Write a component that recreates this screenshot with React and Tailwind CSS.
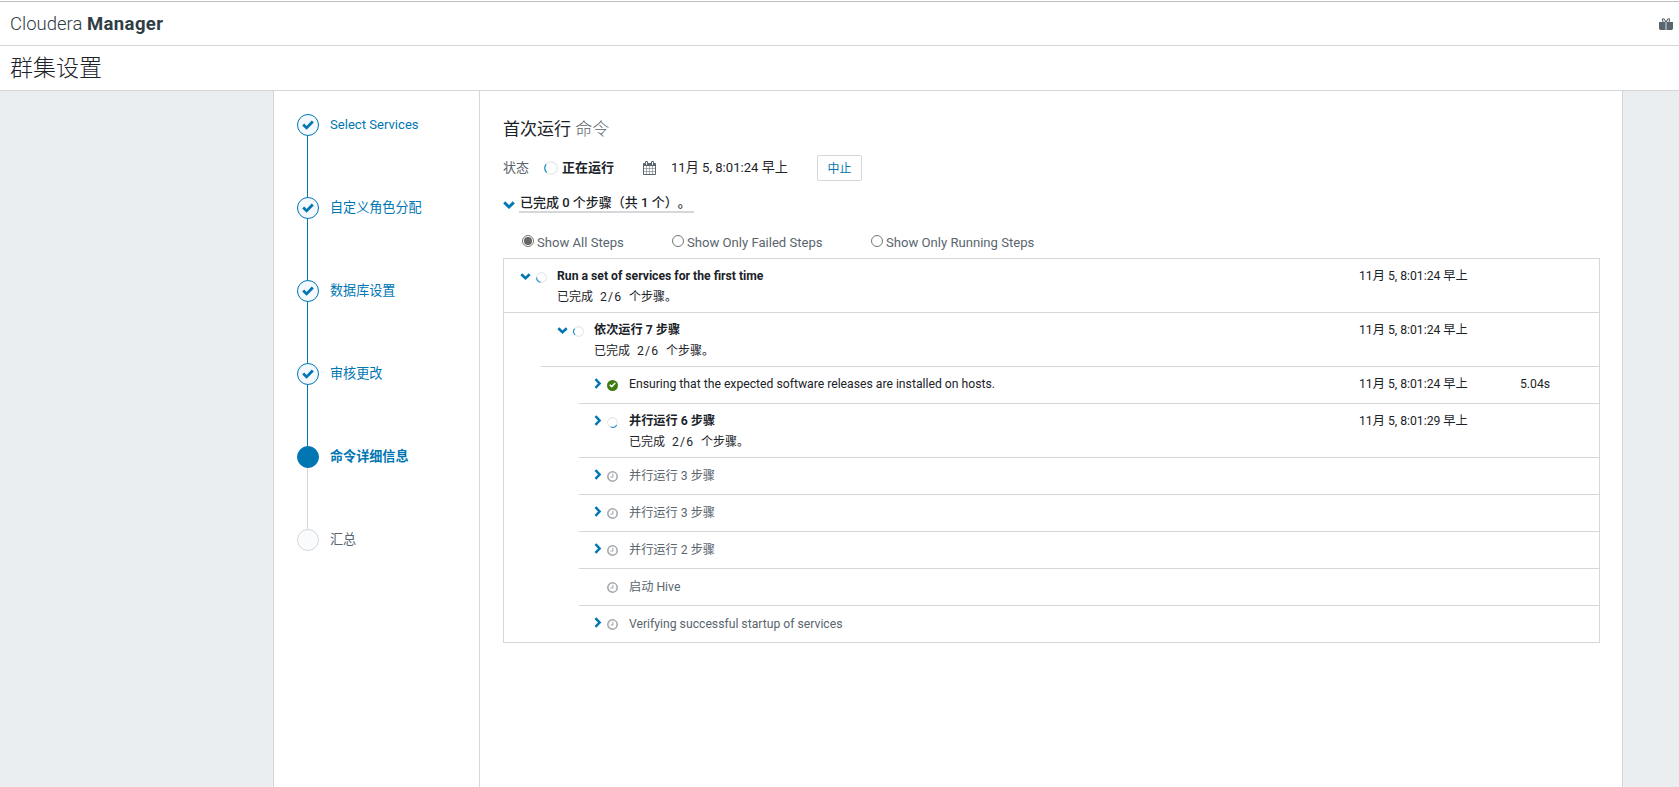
import React from 'react';
import clsx from 'clsx';

const steps = [
  { label: 'Select Services', state: 'done' },
  { label: '自定义角色分配', state: 'done' },
  { label: '数据库设置', state: 'done' },
  { label: '审核更改', state: 'done' },
  { label: '命令详细信息', state: 'current' },
  { label: '汇总', state: 'todo' },
];

const filters = [
  { label: 'Show All Steps', checked: true, width: 'w-[150px]' },
  { label: 'Show Only Failed Steps', checked: false, width: 'w-[199px]' },
  { label: 'Show Only Running Steps', checked: false, width: 'w-[200px]' },
];

const commands = [
  { level: 0, arrow: 'down', status: 'running', turn: 100, title: 'Run a set of services for the first time', progress: '2/6', time: '11月 5, 8:01:24 早上' },
  { level: 1, arrow: 'down', status: 'running', turn: 135, title: '依次运行 7 步骤', progress: '2/6', time: '11月 5, 8:01:24 早上' },
  { level: 2, arrow: 'right', status: 'success', title: 'Ensuring that the expected software releases are installed on hosts.', time: '11月 5, 8:01:24 早上', duration: '5.04s' },
  { level: 2, arrow: 'right', status: 'running', turn: 30, title: '并行运行 6 步骤', progress: '2/6', time: '11月 5, 8:01:29 早上' },
  { level: 2, arrow: 'right', status: 'pending', title: '并行运行 3 步骤' },
  { level: 2, arrow: 'right', status: 'pending', title: '并行运行 3 步骤' },
  { level: 2, arrow: 'right', status: 'pending', title: '并行运行 2 步骤' },
  { level: 2, status: 'pending', title: '启动 Hive' },
  { level: 2, arrow: 'right', status: 'pending', title: 'Verifying successful startup of services' },
];

function ChevronDown({ className }) {
  return (
    <svg viewBox="0 0 12 8" className={className} fill="none" stroke="#0076b3" strokeWidth="2.9">
      <path d="M1.2 1.4 6 6l4.8-4.6" />
    </svg>
  );
}

function ChevronRight({ className }) {
  return (
    <svg viewBox="0 0 8 12" className={className} fill="none" stroke="#0076b3" strokeWidth="2.7">
      <path d="M1.5 1.3 6 6 1.5 10.7" />
    </svg>
  );
}

function Check({ className }) {
  return (
    <svg viewBox="0 0 12 10" className={className} fill="none" stroke="currentColor" strokeWidth="2.8">
      <path d="M1.2 4.6 4.6 7.9 10.8 1.6" />
    </svg>
  );
}

function Spinner({ className, turn }) {
  return (
    <svg viewBox="0 0 14 14" className={className} fill="none">
      <circle cx="7" cy="7" r="6.2" stroke="#e3e7ea" strokeWidth="1.3" />
      <circle
        cx="7"
        cy="7"
        r="6.2"
        stroke="#2a93c9"
        strokeWidth="1.4"
        strokeDasharray="8.5 40"
        transform={`rotate(${turn} 7 7)`}
      />
    </svg>
  );
}

function Calendar() {
  return (
    <svg viewBox="64 0 1664 1792" className="h-[14px] w-[13px]" fill="#5a656d">
      <path d="M192 1664h288v-288h-288v288zm352 0h320v-288h-320v288zm-352-352h288v-320h-288v320zm352 0h320v-320h-320v320zm-352-384h288v-288h-288v288zm736 736h320v-288h-320v288zm-384-736h320v-288h-320v288zm768 736h288v-288h-288v288zm-384-352h320v-320h-320v320zm-352-864v-288q0-13-9.5-22.5t-22.5-9.5h-64q-13 0-22.5 9.5t-9.5 22.5v288q0 13 9.5 22.5t22.5 9.5h64q13 0 22.5-9.5t9.5-22.5zm736 864h288v-320h-288v320zm-384-384h320v-288h-320v288zm384 0h288v-288h-288v288zm32-480v-288q0-13-9.5-22.5t-22.5-9.5h-64q-13 0-22.5 9.5t-9.5 22.5v288q0 13 9.5 22.5t22.5 9.5h64q13 0 22.5-9.5t9.5-22.5zm384-64v1280q0 52-38 90t-90 38h-1408q-52 0-90-38t-38-90v-1280q0-52 38-90t90-38h128v-96q0-66 47-113t113-47h64q66 0 113 47t47 113v96h384v-96q0-66 47-113t113-47h64q66 0 113 47t47 113v96h128q52 0 90 38t38 90z" />
    </svg>
  );
}

function Gift() {
  return (
    <svg viewBox="0 0 14 12" className="h-3 w-[14px]" fill="none">
      <path d="M0 4h6.5v8H.6V11H0zM7.5 4H14v7h-.6v1H7.5z" fill="#5a656d" />
      <path d="M6.5 4h1v8h-1z" fill="#7f93ad" />
      <path d="M6.6 4C6 1.6 4.9.6 4.1.7c-1 .2-.9 2 .2 3.1M7.4 4C8 1.6 9.1.6 9.9.7c1 .2.9 2-.2 3.1" stroke="#5a656d" strokeWidth="1.1" />
    </svg>
  );
}

function StatusIcon({ status, turn }) {
  if (status === 'running') return <Spinner className="h-[11px] w-[11px]" turn={turn} />;
  if (status === 'success') {
    return (
      <span className="flex h-[11px] w-[11px] items-center justify-center rounded-full bg-[#3b7d0f] text-white">
        <Check className="h-[6px] w-[7px]" />
      </span>
    );
  }
  return (
    <svg viewBox="0 0 12 12" className="h-[11px] w-[11px]" fill="none" stroke="#a3a8ac">
      <circle cx="6" cy="6" r="5.1" strokeWidth="1.7" />
      <path d="M6.4 3v3.5H3.8" strokeWidth="1.1" />
    </svg>
  );
}

function WizardSteps() {
  return (
    <aside className="w-[206px] shrink-0 border-r border-[#d5d7da] pt-[23px] pl-[23px]">
      {steps.map((step, i) => (
        <div key={step.label} className="flex h-[83px]">
          <div className="flex w-[22px] flex-col items-center">
            <div
              className={clsx(
                'flex h-[22px] w-[22px] shrink-0 items-center justify-center rounded-full border text-[#0076b3]',
                step.state === 'done' && 'border-[#0076b3] bg-[#f3f9fd]',
                step.state === 'current' && 'border-[#0076b3] bg-[#0076b3]',
                step.state === 'todo' && 'border-[#d5d7da] bg-[#fafbfd]'
              )}
            >
              {step.state === 'done' && <Check className="h-[10px] w-[12px]" />}
            </div>
            {i < steps.length - 1 && (
              <div className={clsx('mr-px w-px flex-1', step.state === 'current' ? 'bg-[#d5d7da]' : 'bg-[#0076b3]')} />
            )}
          </div>
          <span
            className={clsx(
              'ml-[11px] h-[22px] text-[13.1px] leading-[21px]',
              step.state === 'todo' ? 'text-[#5a656d]' : 'text-[#0076b3]',
              step.state === 'current' && 'font-bold'
            )}
          >
            {step.label}
          </span>
        </div>
      ))}
    </aside>
  );
}

function CommandRow({ row, last }) {
  const nested = row.level === 2;
  return (
    <div
      className={clsx(
        'flex items-start pt-2',
        row.progress ? 'h-[54px]' : last ? 'h-9' : 'h-[37px]',
        !last && 'border-b border-[#d5d7da]',
        row.level === 1 && 'ml-[37px]',
        nested && 'ml-[75px]'
      )}
    >
      <div className={clsx('flex h-5 shrink-0 items-center', nested ? 'w-[50px] pl-[15px]' : 'w-[53px] pl-4')}>
        <span className={clsx('flex items-center', nested ? 'w-[12.5px]' : 'w-[16px]')}>
          {row.arrow === 'down' && <ChevronDown className="mb-0.5 h-[7px] w-[11px]" />}
          {row.arrow === 'right' && <ChevronRight className="mb-[3px] h-[11px] w-[7.5px]" />}
        </span>
        <StatusIcon status={row.status} turn={row.turn} />
      </div>
      <div className="flex-1">
        <p
          className={clsx(
            'text-[12.2px]',
            row.status === 'running' && 'font-bold',
            row.status === 'pending' ? 'leading-5 text-[#5a656d]' : 'leading-[18px] text-[#1b2329]'
          )}
        >
          {row.title}
        </p>
        {row.progress && (
          <p className="flex text-[12px] leading-6 text-[#1b2329]">
            <span>已完成</span>
            <span className="ml-[7px] w-[29px] text-[12.2px] tracking-[1.2px]">{row.progress}</span>
            <span>个步骤。</span>
          </p>
        )}
      </div>
      <div className="w-[161px] text-[12.2px] leading-[18px] text-[#1b2329]">{row.time}</div>
      <div className="w-[79px] text-[12.2px] leading-[18px] text-[#1b2329]">{row.duration}</div>
    </div>
  );
}

export default function App() {
  return (
    <div className="flex h-[787px] w-[1679px] flex-col overflow-hidden bg-white font-[Roboto,'Noto_Sans_CJK_SC',sans-serif] text-[13px] text-[#1b2329]">
      <header className="mt-px flex h-[45px] shrink-0 items-center justify-between border-t border-b border-t-[#bdbdbd] border-b-[#d5d7da] pr-1.5 pl-2.5">
        <div className="pt-0.5 text-[18.5px] text-[#2f3d45]">
          <span className="font-light">Cloudera</span> <span className="font-bold tracking-[0.4px]">Manager</span>
        </div>
        <Gift />
      </header>
      <div className="flex h-[45px] shrink-0 items-center border-b border-[#d5d7da] pl-2.5">
        <h1 className="pt-0.5 text-[23px] leading-[42px] font-light">群集设置</h1>
      </div>

      <div className="flex flex-1 bg-[#eaeef1] pr-14 pl-[273px]">
        <div className="flex w-[1350px] border-x border-[#d5d7da] bg-white">
          <WizardSteps />

          <main className="flex-1 pt-[26px] pr-[22px] pl-[23px]">
            <h2 className="h-6 text-[17px] leading-6">
              首次运行 <span className="font-light text-[#5a656d]">命令</span>
            </h2>

            <div className="mt-[14px] flex h-[26px] items-center">
              <span className="w-[41px] text-[#5a656d]">状态</span>
              <Spinner className="h-[14px] w-[14px]" turn={135} />
              <span className="ml-[4px] w-[81px] font-bold">正在运行</span>
              <Calendar />
              <span className="ml-[15px] w-[146px] text-[13.1px]">11月 5, 8:01:24 早上</span>
              <button className="h-[26px] w-[45px] rounded-[2px] border border-[#d5d7da] pt-px text-[12px] text-[#0076b3]">中止</button>
            </div>

            <div className="mt-[13px] flex h-[19px] items-center">
              <ChevronDown className="mt-[3px] mr-[4px] h-2 w-3" />
              <span className="h-[19px] w-[175px] border-b-2 border-[#d5d7da] pl-px leading-[17px] font-medium whitespace-nowrap [text-spacing-trim:space-all]">
                已完成 0 个步骤（共 1 个）。
              </span>
            </div>

            <div className="mt-5 flex h-[19px] items-center pl-[19px]">
              {filters.map((filter) => (
                <label key={filter.label} className={clsx('flex items-center text-[13.1px] text-[#5a656d]', filter.width)}>
                  <span className="mr-[3px] mb-[3px] flex h-3 w-3 items-center justify-center rounded-full border border-[#767676]">
                    {filter.checked && <span className="h-2 w-2 rounded-full bg-[#666]" />}
                  </span>
                  <span className="whitespace-nowrap">{filter.label}</span>
                </label>
              ))}
            </div>

            <div className="mt-[6px] border border-[#d5d7da]">
              {commands.map((row, i) => (
                <CommandRow key={i} row={row} last={i === commands.length - 1} />
              ))}
            </div>
          </main>
        </div>
      </div>
    </div>
  );
}
